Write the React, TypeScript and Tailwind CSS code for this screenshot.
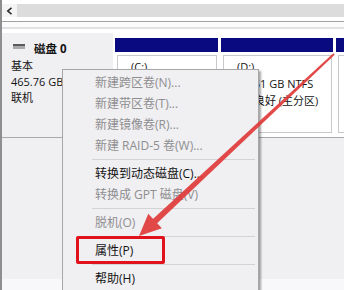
import React from "react";

const Sep = () => (
  <div className="h-[7px] flex items-center ml-[29px] mr-[3px]">
    <div className="h-px w-full bg-[#d3d3d6]" />
  </div>
);

const Item = ({ label, disabled }: { label: string; disabled?: boolean }) => (
  <div
    className={`h-[21px] flex items-center pl-[32px] text-[12px] leading-none whitespace-nowrap ${
      disabled ? "text-[#8e8e90]" : "text-[#141414]"
    }`}
  >
    {label}
  </div>
);

const Partition = ({
  width,
  lines,
  grow,
  shift,
}: {
  width?: string;
  lines: string[];
  grow?: boolean;
  shift?: boolean;
}) => (
  <div className={`flex flex-col shrink-0 ${grow ? "flex-1 min-w-0" : ""} ${width ?? ""}`}>
    <div className="h-[14px] bg-[#0a0a80]" />
    <div className="mt-[3px] ml-[2px] mr-px h-[78px] border border-[#c9c9cc] bg-white overflow-hidden pl-[13px] pt-[2px]">
      {lines.map((l, i) => (
        <div
          key={i}
          className={`h-[17px] flex items-center text-[11px] leading-none text-[#141414] whitespace-nowrap ${
            shift && i > 0 ? "-ml-[5px]" : ""
          }`}
        >
          {l}
        </div>
      ))}
    </div>
  </div>
);

export default function App() {
  return (
    <div className="w-[344px] h-[290px] relative overflow-hidden bg-[#f0eff2] flex font-['Open_Sans','Noto_Sans_CJK_SC',sans-serif]">
      <div className="w-[2px] shrink-0 bg-[#8e8e90]" />
      <div className="flex-1 flex flex-col min-w-0">
        <div className="h-[4px] bg-white" />
        <div className="h-[13px] flex">
          <div className="w-[15px] bg-[#f4f4f4] flex items-center justify-center">
            <svg width="7" height="8" viewBox="0 0 7 8">
              <polyline points="5.5,0.8 1.8,4 5.5,7.2" fill="none" stroke="#2a2a2a" strokeWidth="1.6" />
            </svg>
          </div>
          <div className="flex-1 bg-[#dcdcdc]" />
        </div>
        <div className="h-[4px] bg-white" />
        <div className="h-px bg-[#a2a2a4]" />
        <div className="h-[5px] bg-[#fbfbfb]" />
        <div className="h-[2px] bg-[#e2e2e4]" />
        <div className="h-[2px] bg-white" />
        {/* disk row */}
        <div className="h-[106px] flex bg-white">
          <div className="w-[111px] shrink-0 mt-[2px] bg-[#f0eff2] pl-[9px] pt-[8px] text-[11px] text-[#141414] leading-none">
            <div className="h-[16px] flex items-center">
              <svg width="12" height="5" viewBox="0 0 12 5" className="ml-[2px] mr-[9px] -mt-[5px]">
                <rect x="0" y="0" width="12" height="2" fill="#5a5a5c" />
                <rect x="0" y="2" width="12" height="3" fill="#a9a9ab" />
              </svg>
              <span className="font-bold text-[11.5px]">磁盘 0</span>
            </div>
            <div className="h-[16px] flex items-center">基本</div>
            <div className="h-[16px] flex items-center whitespace-nowrap">465.76 GB</div>
            <div className="h-[16px] flex items-center">联机</div>
          </div>
          <div className="flex-1 min-w-0 flex pl-[2px] pt-[7px] gap-[3px]">
            <Partition width="w-[103px]" lines={["(C:)", "97.66 GB NTFS", "状态良好 (系统, 启动)"]} />
            <Partition width="w-[112px]" shift lines={["(D:)", "367.61 GB NTFS", "状态良好 (主分区)"]} />
            <Partition grow lines={["", "", ""]} />
          </div>
        </div>
        <div className="h-px bg-[#a9a9ab]" />
        <div className="h-[141px]" />
        <div className="flex-1 bg-[#f8f8fa]" />
      </div>

      {/* context menu */}
      <div className="absolute left-[62px] top-[69px] w-[197px] h-[232px] bg-[#f0eff2] border border-[#a6a6a8] shadow-[2px_2px_2px_rgba(0,0,0,0.35)] pt-[2px]">
        <Item label="新建跨区卷(N)..." disabled />
        <Item label="新建带区卷(T)..." disabled />
        <Item label="新建镜像卷(R)..." disabled />
        <Item label="新建 RAID-5 卷(W)..." disabled />
        <Sep />
        <Item label="转换到动态磁盘(C)..." />
        <Item label="转换成 GPT 磁盘(V)" disabled />
        <Sep />
        <Item label="脱机(O)" disabled />
        <Sep />
        <Item label="属性(P)" />
        <Sep />
        <Item label="帮助(H)" />
      </div>

      {/* highlight box */}
      <div className="absolute left-[76px] top-[236px] w-[89px] h-[28px] border-[3px] border-[#e0121c] rounded-[2px]" />

      {/* arrow */}
      <svg className="absolute left-0 top-0 pointer-events-none" width="344" height="290" viewBox="0 0 344 290">
        <g fill="#e03b3b" opacity="0.92">
          <polygon points="334.7,54.7 333.3,53.3 150.2,221.5 154.2,225.9" />
          <polygon points="139,236 148.3,213.7 161.9,228.3" />
        </g>
      </svg>
    </div>
  );
}
